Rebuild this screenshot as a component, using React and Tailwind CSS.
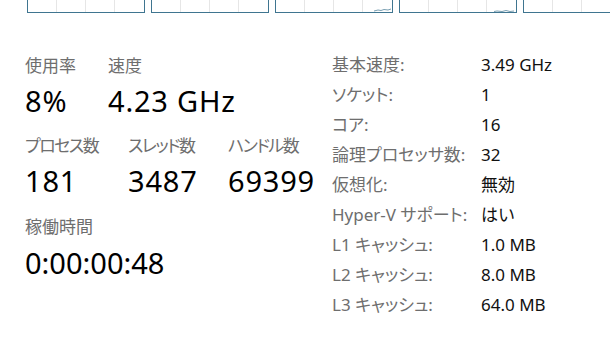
import React from "react";

const font = { fontFamily: '"Noto Sans", "Noto Sans CJK JP", sans-serif' };

const specs = [
    ["基本速度:", "3.49 GHz"],
    ["ソケット:", "1"],
    ["コア:", "16"],
    ["論理プロセッサ数:", "32"],
    ["仮想化:", "無効"],
    ["Hyper-V サポート:", "はい"],
    ["L1 キャッシュ:", "1.0 MB"],
    ["L2 キャッシュ:", "8.0 MB"],
    ["L3 キャッシュ:", "64.0 MB"],
];

// cut-off graph thumbnails along the top edge
const GraphBox = ({ blip }) => (
    <div className="relative shrink-0 w-[118px] h-[13px] border border-t-0 border-[#3f7590] grid grid-cols-4">
        <div className="border-r border-[#e6e6e6]" />
        <div className="border-r border-[#e6e6e6]" />
        <div className="border-r border-[#e6e6e6]" />
        <div />
        {blip && (
            <svg className="absolute bottom-0 right-0" width="26" height="5" viewBox="0 0 26 5">
                <polyline
                    points={blip}
                    fill="none"
                    stroke="#3f7590"
                    strokeWidth="1"
                    opacity="0.7"
                />
            </svg>
        )}
    </div>
);

const Label = ({ children, className = "" }) => (
    <div className={`text-[17px] leading-[24px] text-[#6e6e6e] whitespace-nowrap [font-feature-settings:'palt'] ${className}`}>
        {children}
    </div>
);

const Value = ({ children, className = "" }) => (
    <div className={`text-[29px] leading-[36px] text-black whitespace-nowrap ${className}`}>
        {children}
    </div>
);

const Stat = ({ label, value, width, kana }) => (
    <div className={`shrink-0 ${width || ""}`}>
        <Label className={kana ? "tracking-[-1.5px]" : ""}>{label}</Label>
        <Value className="mt-[5px] tracking-[0.8px]">{value}</Value>
    </div>
);

const App = () => {
    return (
        <div className="w-[610px] h-[358px] bg-white overflow-hidden" style={font}>
            <div className="flex gap-[6px] pl-[27px]">
                <GraphBox />
                <GraphBox />
                <GraphBox blip="8,4 12,3 15,3.5 18,2.5 22,3 25,2" />
                <GraphBox blip="4,4.5 7,4 12,4.5 16,3.5 20,4.5 24,4" />
                <GraphBox />
            </div>

            <div className="flex">
                {/* left: live numbers */}
                <div className="w-[332px] shrink-0 pl-[25px] pt-[41px]">
                    <div className="flex">
                        <Stat label="使用率" value="8%" width="w-[83px]" />
                        <Stat label="速度" value="4.23 GHz" />
                    </div>
                    <div className="flex mt-[15px]">
                        <Stat label="プロセス数" value="181" width="w-[103px]" kana />
                        <Stat label="スレッド数" value="3487" width="w-[100px]" kana />
                        <Stat label="ハンドル数" value="69399" kana />
                    </div>
                    <div className="mt-[16px]">
                        <Label>稼働時間</Label>
                        <Value className="mt-[6px]">0:00:00:48</Value>
                    </div>
                </div>

                {/* right: static specs */}
                <div className="pt-[37px] flex flex-col">
                    {specs.map(([k, v]) => (
                        <div key={k} className="flex h-[30px] items-center text-[17px] whitespace-nowrap">
                            <span className="w-[149px] shrink-0 text-[#6e6e6e] [font-feature-settings:'palt']">{k}</span>
                            <span className="text-[#111]">{v}</span>
                        </div>
                    ))}
                </div>
            </div>
        </div>
    );
};

export default App;
